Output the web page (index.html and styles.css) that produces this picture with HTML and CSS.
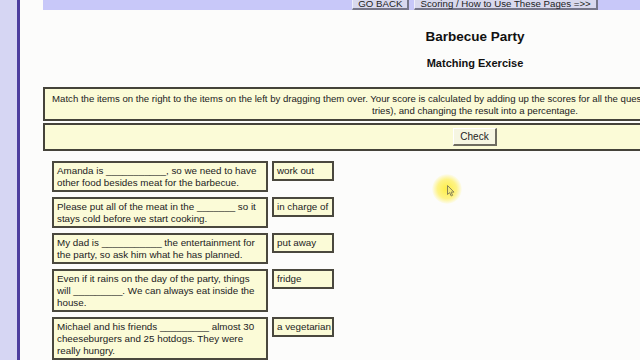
FILE: index.html
```html
<!DOCTYPE html>
<html lang="en">
<head>
    <meta charset="UTF-8">
    <meta name="viewport" content="width=device-width, initial-scale=1.0">
    <title>Barbecue Party</title>
    <link rel="stylesheet" href="styles.css">
</head>
<body>
    <div class="page">
        <div class="side"></div>

        <div class="main">
            <div class="navbar">
                <button class="nav-btn">GO BACK</button>
                <button class="nav-btn">Scoring / How to Use These Pages =&gt;&gt;</button>
            </div>

            <h1>Barbecue Party</h1>
            <h2>Matching Exercise</h2>

            <div class="instructions">
                Match the items on the right to the items on the left by dragging them over. Your score is calculated by adding up the scores for all the questions (each question is worth 100% divided by the number of<br>
                tries), and changing the result into a percentage.
            </div>

            <div class="check-bar">
                <button class="check-btn">Check</button>
            </div>

            <div class="items">
                <div class="row">
                    <div class="question">Amanda is ___________, so we need to have<br>other food besides meat for the barbecue.</div>
                    <div class="answer">work out</div>
                </div>
                <div class="row">
                    <div class="question">Please put all of the meat in the _______ so it<br>stays cold before we start cooking.</div>
                    <div class="answer">in charge of</div>
                </div>
                <div class="row">
                    <div class="question">My dad is ___________ the entertainment for<br>the party, so ask him what he has planned.</div>
                    <div class="answer">put away</div>
                </div>
                <div class="row">
                    <div class="question">Even if it rains on the day of the party, things<br>will _________. We can always eat inside the<br>house.</div>
                    <div class="answer">fridge</div>
                </div>
                <div class="row">
                    <div class="question">Michael and his friends _________ almost 30<br>cheeseburgers and 25 hotdogs. They were<br>really hungry.</div>
                    <div class="answer">a vegetarian</div>
                </div>
            </div>
        </div>
    </div>

    <!-- mouse pointer highlight -->
    <div class="pointer">
        <svg width="8" height="12" viewBox="0 0 8 12">
            <path d="M0.5 0.5 L0.5 9.5 L2.6 7.6 L4.2 11 L5.6 10.3 L4.1 7.1 L7 7.1 Z" fill="#f3ea7a" stroke="#8a8456" stroke-width="1"/>
        </svg>
    </div>
</body>
</html>
```

FILE: styles.css
```css
* {
    margin: 0;
    padding: 0;
    box-sizing: border-box;
}

html, body {
    overflow: hidden;
    height: 100%;
}

body {
    font-family: 'Liberation Sans', Arial, sans-serif;
    background: #fcfcfb;
    color: #222;
}

.page {
    display: flex;
    width: 940px;
    min-height: 100%;
}

.side {
    width: 20px;
    flex-shrink: 0;
    background: #d6d6f3;
    border-right: 3px solid #4d3e9e;
}

.main {
    width: 864px;
    flex-shrink: 0;
    margin-left: 23px;
}

.navbar {
    height: 10px;
    background: #c8c8f9;
    display: flex;
    justify-content: center;
    align-items: flex-start;
    gap: 5px;
    overflow: hidden;
}

.nav-btn {
    height: 11px;
    margin-top: -1px;
    padding: 0 5px;
    font-family: 'Liberation Sans', Arial, sans-serif;
    font-size: 9.7px;
    line-height: 9px;
    color: #222;
    background: #d9d9ee;
    border: 1px solid #eeeefa;
    border-top: none;
    border-right: 2px solid #77778a;
    border-bottom: 2px solid #77778a;
}

h1 {
    text-align: center;
    font-size: 13.5px;
    line-height: 16px;
    font-weight: bold;
    color: #111;
    margin-top: 19px;
}

h2 {
    text-align: center;
    font-size: 11px;
    line-height: 14px;
    font-weight: bold;
    color: #111;
    margin-top: 11px;
}

.instructions {
    margin-top: 17px;
    background: #fbfbd7;
    border: 2px solid #45433a;
    padding: 4px 0 3px;
    font-size: 9.6px;
    line-height: 11.5px;
    text-align: center;
    white-space: nowrap;
    color: #222;
}

.check-bar {
    margin-top: 2px;
    background: #fbfbd7;
    border: 2px solid #45433a;
    padding: 3px 0;
    display: flex;
    justify-content: center;
}

.check-btn {
    width: 44px;
    height: 18px;
    font-family: 'Liberation Sans', Arial, sans-serif;
    font-size: 10px;
    color: #222;
    background: #f6f6e2;
    border: 1px solid #ffffff;
    border-right: 2px solid #6e6c60;
    border-bottom: 2px solid #6e6c60;
}

.items {
    margin-top: 10px;
    margin-left: 9px;
    display: flex;
    flex-direction: column;
    gap: 5px;
}

.row {
    display: flex;
    align-items: flex-start;
    gap: 4px;
}

.question,
.answer {
    background: #fbfbd7;
    border: 2px solid #4a483e;
    font-size: 9.8px;
    line-height: 12px;
    color: #222;
    white-space: nowrap;
}

.question {
    width: 216px;
    padding: 2px 3px 1px;
}

.answer {
    width: 62px;
    padding: 2px 3px;
}

.pointer {
    position: absolute;
    left: 432px;
    top: 174px;
    width: 30px;
    height: 30px;
    border-radius: 50%;
    background: radial-gradient(circle, rgba(255, 236, 50, 0.9) 0%, rgba(255, 238, 70, 0.65) 45%, rgba(255, 245, 120, 0) 72%);
}

.pointer svg {
    position: absolute;
    left: 15px;
    top: 11px;
}
```
